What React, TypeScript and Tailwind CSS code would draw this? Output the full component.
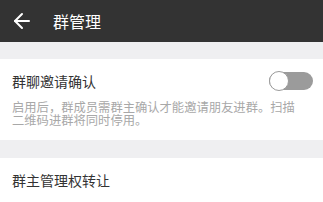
import { ArrowLeft } from "lucide-react";

const font = { fontFamily: '"Noto Sans CJK SC", "Noto Sans", sans-serif' };

function Toggle() {
  return (
    <div className="relative h-[18px] w-[44px] rounded-full bg-[#9b9b9b]">
      <div className="absolute left-0 top-[-1px] h-[20px] w-[20px] rounded-full border-[1.5px] border-[#9b9b9b] bg-white" />
    </div>
  );
}

export default function App() {
  return (
    <div className="h-[202px] w-[323px] overflow-hidden bg-[#efeff1]" style={font}>
      <header className="flex h-[42px] items-center bg-[#333333] pl-[10px]">
        <ArrowLeft size={24} strokeWidth={2} className="text-white" />
        <span className="ml-[19px] text-[16px] leading-none text-white">群管理</span>
      </header>

      <div className="h-[17px]" />

      <section className="bg-white pb-[13px] pl-[12px] pr-[10px] pt-[13px]">
        <div className="flex h-[18px] items-center justify-between">
          <span className="text-[14px] leading-[18px] text-[#333333]">群聊邀请确认</span>
          <Toggle />
        </div>
        <p className="mt-[11px] max-w-[290px] text-[12.3px] leading-[13px] text-[#a8a8a8]">
          启用后，群成员需群主确认才能邀请朋友进群。扫描二维码进群将同时停用。
        </p>
      </section>

      <div className="h-[18px]" />

      <section className="flex h-[48px] items-center bg-white px-[12px] pb-[4px]">
        <span className="text-[14px] leading-[18px] text-[#333333]">群主管理权转让</span>
      </section>
    </div>
  );
}
